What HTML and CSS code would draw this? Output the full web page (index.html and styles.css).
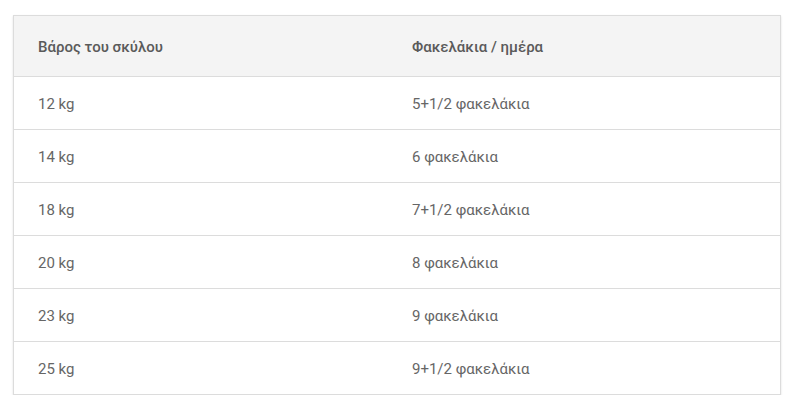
FILE: index.html
```html
<!DOCTYPE html>
<html lang="el">
<head>
<meta charset="utf-8">
<link rel="stylesheet" href="styles.css">
</head>
<body>
<div class="wrap">
<table class="dose">
<thead>
<tr><th class="c1">Βάρος του σκύλου</th><th>Φακελάκια / ημέρα</th></tr>
</thead>
<tbody>
<tr><td class="c1">12 kg</td><td>5+1/2 φακελάκια</td></tr>
<tr><td class="c1">14 kg</td><td>6 φακελάκια</td></tr>
<tr><td class="c1">18 kg</td><td>7+1/2 φακελάκια</td></tr>
<tr><td class="c1">20 kg</td><td>8 φακελάκια</td></tr>
<tr><td class="c1">23 kg</td><td>9 φακελάκια</td></tr>
<tr><td class="c1">25 kg</td><td>9+1/2 φακελάκια</td></tr>
</tbody>
</table>
</div>
</body>
</html>
```
FILE: styles.css
```css
html, body { margin: 0; padding: 0; background: #fff; }
body { font-family: Roboto, "Noto Sans", sans-serif; color: #666; }
.wrap { padding: 15px 0 0 13px; }
.dose {
  width: 768px;
  border-collapse: collapse;
  border: 1px solid #dcdcdc;
  box-shadow: 0 1px 2px rgba(0,0,0,0.12);
  table-layout: fixed;
}
.dose th, .dose td {
  text-align: left;
  padding: 1px 0 0 24px;
  font-size: 15px;
  letter-spacing: 0;
}
.dose .c1 { width: 350px; }
.dose th {
  height: 59px;
  background: #f4f4f4;
  font-weight: 500;
  color: #5a5a5a;
  border-bottom: 1px solid #dcdcdc;
}
.dose td {
  height: 51px;
  border-bottom: 1px solid #dcdcdc;
  font-weight: 400;
}
```
